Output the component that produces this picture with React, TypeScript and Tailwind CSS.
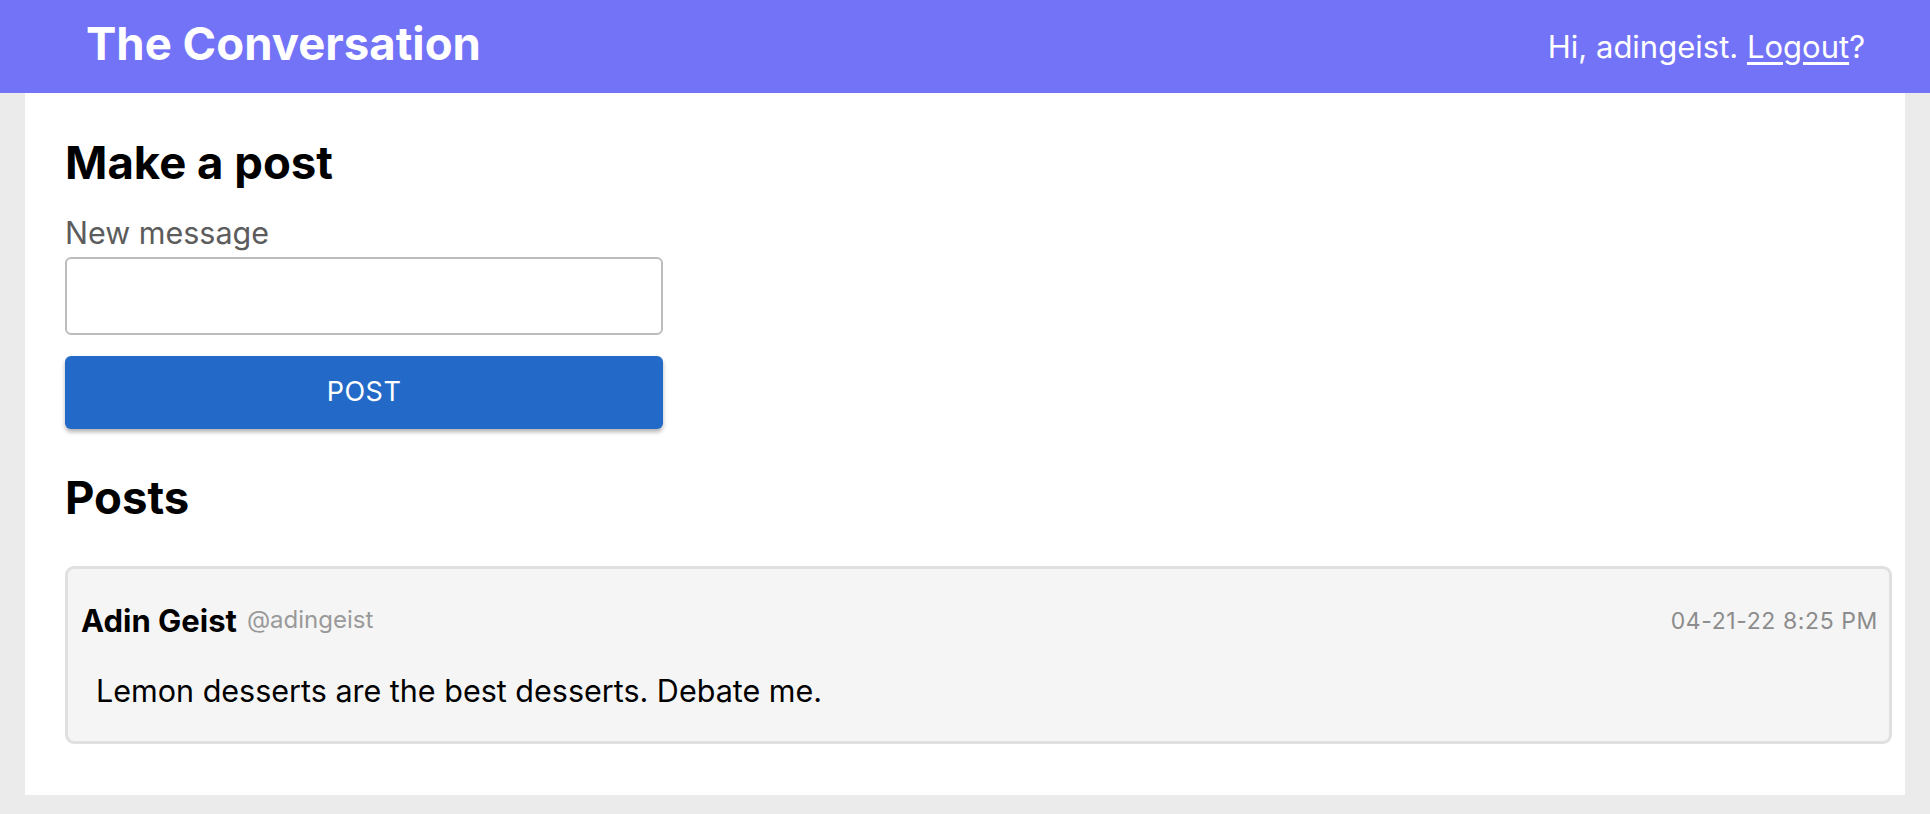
import React from "react";

const posts = [
  {
    id: 1,
    name: "Adin Geist",
    handle: "@adingeist",
    date: "04-21-22 8:25 PM",
    body: "Lemon desserts are the best desserts. Debate me.",
  },
];

const Header = () => (
  <header className="flex h-[93px] items-center justify-between bg-[#7373f7] pl-[86px] pr-[65px] text-white">
    <h1 className="mb-[5px] text-[45.5px] font-bold leading-[56px]">The Conversation</h1>
    <p className="text-[31px] leading-[36px]">
      Hi, adingeist.{" "}
      <a href="#" className="underline underline-offset-[4px]">
        Logout
      </a>
      ?
    </p>
  </header>
);

export default function App() {
  return (
    <div className="min-h-screen bg-[#ebebeb] font-['Inter',sans-serif] text-black">
      <Header />
      <main className="mx-[25px] bg-white pb-[51px] pl-[40px] pr-[13px] pt-[43px]">
        {/* Composer */}
        <h2 className="text-[45.5px] font-bold leading-[54px]">Make a post</h2>
        <label className="mt-[25px] block text-[30.5px] leading-[36px] text-[#5c5c5c]">New message</label>
        <input
          type="text"
          className="mt-[6px] block h-[78px] w-[598px] rounded-[6px] border-2 border-[#bdbdbd] bg-white px-3 text-[28px] outline-none"
        />
        <button className="mt-[21px] block h-[73px] w-[598px] rounded-[6px] bg-[#236ac8] text-[27px] tracking-[0.5px] text-white shadow-[0_3px_4px_rgba(0,0,0,0.3)]">
          POST
        </button>

        {/* Feed */}
        <h2 className="mt-[42px] text-[45.5px] font-bold leading-[54px]">Posts</h2>
        <div className="mt-[41px] flex flex-col gap-4">
          {posts.map(p => (
            <div key={p.id} className="rounded-[9px] border-[3px] border-[#e0e0e0] bg-[#f5f5f5] pb-[32px] pl-[13px] pr-[11px] pt-[34px]">
              <div className="flex items-center justify-between">
                <div className="flex items-center gap-[10px]">
                  <span className="text-[31px] font-bold leading-[36px]">{p.name}</span>
                  <span className="mt-[-2px] text-[24px] text-[#9a9a9a]">{p.handle}</span>
                </div>
                <span className="text-[23px] tracking-[0.6px] text-[#8c8c8c]">{p.date}</span>
              </div>
              <p className="mt-[34px] pl-[15px] text-[30.5px] leading-[36px]">{p.body}</p>
            </div>
          ))}
        </div>
      </main>
    </div>
  );
}
